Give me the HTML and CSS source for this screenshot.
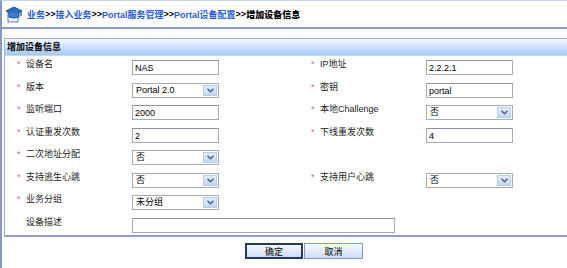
FILE: index.html
```html
<!DOCTYPE HTML>
<html>
<head>
<meta http-equiv="Content-Type" content="text/html; charset=utf-8" />
<title>增加设备信息</title>
<link rel="stylesheet" href="styles.css">
</head>
<body>
	<div class="page">
		<div class="crumb">
			<svg class="crumbIcon" width="18" height="17" viewBox="0 0 18 17">
				<rect x="3" y="7" width="10" height="9" fill="#e8eef8" stroke="#5a7fb8" />
				<polygon points="1,5 9,1 17,5 9,9" fill="#2f6fc0" stroke="#1d4f98" />
				<path d="M4 7 L4 11 Q9 13 14 11 L14 7" fill="#3f80cc" stroke="#1d4f98" />
				<path d="M16 5 L16 10" stroke="#1d4f98" stroke-width="1.2" />
			</svg>
			<a href="#">业务</a>&gt;&gt;<a href="#">接入业务</a>&gt;&gt;<a href="#">Portal服务管理</a>&gt;&gt;<a href="#">Portal设备配置</a>&gt;&gt;<b>增加设备信息</b>
		</div>

		<div class="panel">
			<div class="panelTitle">增加设备信息</div>
			<div class="form">
				<div class="row">
					<label class="lbl"><i>*</i>设备名</label>
					<div class="fld"><input class="txt" value="NAS"></div>
					<label class="lbl lblR"><i>*</i>IP地址</label>
					<div class="fld"><input class="txt" value="2.2.2.1"></div>
				</div>
				<div class="row">
					<label class="lbl"><i>*</i>版本</label>
					<div class="fld"><span class="sel"><span class="selText">Portal 2.0</span><span class="arrow"><svg width="7" height="5" viewBox="0 0 7 5"><path d="M0.5 0.8 L3.5 3.8 L6.5 0.8" fill="none" stroke="#4d6185" stroke-width="1.5" /></svg></span></span></div>
					<label class="lbl lblR"><i>*</i>密钥</label>
					<div class="fld"><input class="txt" value="portal"></div>
				</div>
				<div class="row">
					<label class="lbl"><i>*</i>监听端口</label>
					<div class="fld"><input class="txt" value="2000"></div>
					<label class="lbl lblR"><i>*</i>本地Challenge</label>
					<div class="fld"><span class="sel"><span class="selText">否</span><span class="arrow"><svg width="7" height="5" viewBox="0 0 7 5"><path d="M0.5 0.8 L3.5 3.8 L6.5 0.8" fill="none" stroke="#4d6185" stroke-width="1.5" /></svg></span></span></div>
				</div>
				<div class="row">
					<label class="lbl"><i>*</i>认证重发次数</label>
					<div class="fld"><input class="txt" value="2"></div>
					<label class="lbl lblR"><i>*</i>下线重发次数</label>
					<div class="fld"><input class="txt" value="4"></div>
				</div>
				<div class="row">
					<label class="lbl"><i>*</i>二次地址分配</label>
					<div class="fld"><span class="sel"><span class="selText">否</span><span class="arrow"><svg width="7" height="5" viewBox="0 0 7 5"><path d="M0.5 0.8 L3.5 3.8 L6.5 0.8" fill="none" stroke="#4d6185" stroke-width="1.5" /></svg></span></span></div>
				</div>
				<div class="row">
					<label class="lbl"><i>*</i>支持逃生心跳</label>
					<div class="fld"><span class="sel"><span class="selText">否</span><span class="arrow"><svg width="7" height="5" viewBox="0 0 7 5"><path d="M0.5 0.8 L3.5 3.8 L6.5 0.8" fill="none" stroke="#4d6185" stroke-width="1.5" /></svg></span></span></div>
					<label class="lbl lblR"><i>*</i>支持用户心跳</label>
					<div class="fld"><span class="sel"><span class="selText">否</span><span class="arrow"><svg width="7" height="5" viewBox="0 0 7 5"><path d="M0.5 0.8 L3.5 3.8 L6.5 0.8" fill="none" stroke="#4d6185" stroke-width="1.5" /></svg></span></span></div>
				</div>
				<div class="row">
					<label class="lbl"><i>*</i>业务分组</label>
					<div class="fld"><span class="sel"><span class="selText">未分组</span><span class="arrow"><svg width="7" height="5" viewBox="0 0 7 5"><path d="M0.5 0.8 L3.5 3.8 L6.5 0.8" fill="none" stroke="#4d6185" stroke-width="1.5" /></svg></span></span></div>
				</div>
				<div class="row rowLast">
					<label class="lbl"><i></i>设备描述</label>
					<div class="fld"><input class="txt txtWide" value=""></div>
				</div>
			</div>
		</div>

		<div class="btns">
			<button class="btn btnOn">确定</button><button class="btn">取消</button>
		</div>
	</div>
</body>
</html>
```

FILE: styles.css
```css
* {
	margin: 0;
	padding: 0;
}

body {
	background: #fff;
	font-family: "Liberation Sans", "Noto Sans CJK SC", sans-serif;
	font-size: 9px;
	color: #222;
}

.page {
	height: 268px;
	border-left: 2px solid #8697c9;
	border-top: 1px solid #c9d2e6;
	box-sizing: border-box;
	overflow: hidden;
}

/****面包屑*****/
.crumb {
	height: 26px;
	display: flex;
	align-items: center;
	padding-left: 3px;
	font-weight: bold;
	font-size: 9px;
	color: #000;
	border-bottom: 2px solid #8a9cc9;
}

.crumbIcon {
	margin-right: 4px;
}

.crumb a {
	color: #2a5ccf;
	text-decoration: none;
}

.crumb b {
	color: #000;
}

/****增加设备信息*****/
.panel {
	margin: 9px 0 0 2px;
	border: 1px solid #9db4dc;
	border-right: 0;
	border-bottom: 2px solid #8e9fcf;
}

.panelTitle {
	height: 16px;
	line-height: 16px;
	padding-left: 2px;
	font-weight: bold;
	color: #000;
	background: linear-gradient(#f4f8fe, #a6c7f6);
	border-bottom: 1px solid #c7d7ef;
}

.form {
	padding-top: 2px;
}

.row {
	display: flex;
	align-items: flex-start;
	height: 23px;
}

.row:nth-child(even) {
	height: 22px;
}

.row.rowLast {
	height: 19px;
}

.lbl {
	flex: none;
	width: 127px;
	box-sizing: border-box;
	padding-left: 12px;
	line-height: 12px;
	color: #222;
}

.lbl i {
	display: inline-block;
	width: 9px;
	font-style: normal;
	color: #c4699f;
}

.lblR {
	width: 119px;
	padding-left: 4px;
}

.fld {
	flex: none;
	width: 175px;
	padding-top: 2px;
}

.fld:last-child {
	flex: 1;
	width: auto;
}

.txt {
	display: block;
	width: 87px;
	height: 15px;
	box-sizing: border-box;
	border: 1px solid #a5acb5;
	border-top-color: #8c939c;
	padding: 0 2px;
	font-family: "Liberation Sans", "Noto Sans CJK SC", sans-serif;
	font-size: 9px;
	color: #000;
	outline: none;
}

.txtWide {
	width: 263px;
}

.sel {
	position: relative;
	display: block;
	width: 87px;
	height: 15px;
	box-sizing: border-box;
	border: 1px solid #a5acb5;
	background: #fff;
	color: #000;
	line-height: 13px;
	padding-left: 3px;
}

.sel .arrow {
	position: absolute;
	right: 1px;
	top: 1px;
	width: 14px;
	height: 11px;
	box-sizing: border-box;
	border: 1px solid #b8cbee;
	background: linear-gradient(#e4edfd, #c2d6f8);
	display: flex;
	align-items: center;
	justify-content: center;
}

/****按钮*****/
.btns {
	padding: 6px 0 0 243px;
	display: flex;
}

.btn {
	height: 16px;
	box-sizing: border-box;
	border: 1px solid #7f9cc8;
	background: linear-gradient(#f6f9fe, #cfdcf1);
	font-family: "Liberation Sans", "Noto Sans CJK SC", sans-serif;
	font-size: 9px;
	color: #000;
	width: 59px;
	margin-right: 1px;
}

.btnOn {
	width: 58px;
	border: 2px solid #243a5e;
}
```
